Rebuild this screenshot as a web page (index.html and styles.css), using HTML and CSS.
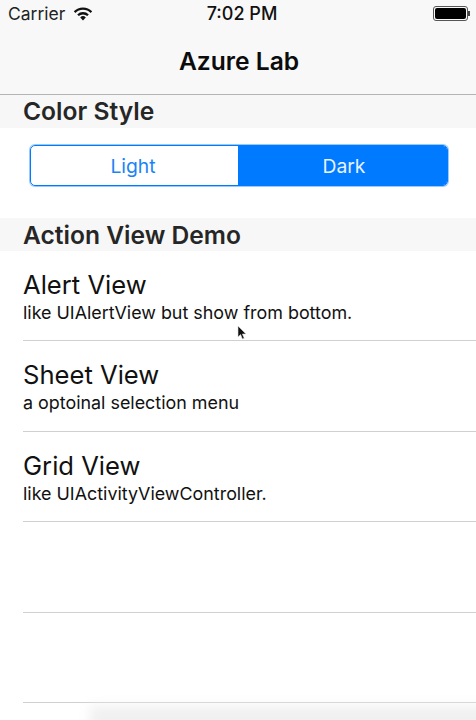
FILE: index.html
```html
<!DOCTYPE html>
<html lang="en">
<head>
    <meta charset="UTF-8">
    <meta name="viewport" content="width=device-width, initial-scale=1.0">
    <title>Azure Lab</title>
    <link rel="stylesheet" href="styles.css">
</head>
<body>
<div class="screen">
    <header class="nav">
        <div class="status">
            <div class="status-left">
                <span>Carrier</span>
                <svg class="wifi" width="20" height="15" viewBox="0 0 20 15">
                    <path d="M10 14.5 7.2 11.4a4 4 0 0 1 5.6 0Z" fill="#111"/>
                    <path d="M4.2 8.4a8.3 8.3 0 0 1 11.6 0l-1.6 1.7a6 6 0 0 0-8.4 0Z" fill="#111"/>
                    <path d="M.8 5.2a13 13 0 0 1 18.4 0l-1.6 1.7a10.7 10.7 0 0 0-15.2 0Z" fill="#111"/>
                </svg>
            </div>
            <div class="status-time">7:02 PM</div>
            <div class="status-right">
                <div class="battery"><div class="battery-fill"></div></div>
                <div class="battery-tip"></div>
            </div>
        </div>
        <h1 class="nav-title">Azure Lab</h1>
    </header>

    <h2 class="section-head">Color Style</h2>
    <div class="segment-wrap">
        <div class="segment">
            <div class="segment-item light">Light</div>
            <div class="segment-item active">Dark</div>
        </div>
    </div>

    <h2 class="section-head">Action View Demo</h2>
    <ul class="list">
        <li class="row">
            <div class="row-title">Alert View</div>
            <div class="row-sub">like UIAlertView but show from bottom.</div>
        </li>
        <li class="row">
            <div class="row-title">Sheet View</div>
            <div class="row-sub">a optoinal selection menu</div>
        </li>
        <li class="row">
            <div class="row-title">Grid View</div>
            <div class="row-sub">like UIActivityViewController.</div>
        </li>
        <li class="row"></li>
        <li class="row"></li>
    </ul>

    <svg class="cursor" width="10" height="15" viewBox="0 0 10 15">
        <path d="M1 1v11l2.6-2.4L5.4 14l1.8-.8-1.8-4.2H9Z" fill="#111" stroke="#ddd" stroke-width=".6"/>
    </svg>
    <div class="bottom-fade"></div>
</div>
</body>
</html>
```

FILE: styles.css
```css
* {
    box-sizing: border-box;
}

body {
    margin: 0;
    background-color: #ffffff;
    font-family: Inter, "Liberation Sans", sans-serif;
}

.screen {
    position: relative;
    width: 476px;
    height: 720px;
    overflow: hidden;
}

.nav {
    height: 95px;
    background-color: #f8f8f8;
    border-bottom: 1px solid #b4b4b4;
}

.status {
    display: grid;
    grid-template-columns: 1fr auto 1fr;
    align-items: center;
    height: 27px;
    padding: 0 6px 0 8px;
    font-size: 17.5px;
    color: #222;
}

.status-left {
    display: flex;
    align-items: center;
    gap: 8px;
}

.status-time {
    margin-left: 6px;
    font-size: 18px;
    font-weight: 500;
    color: #111;
}

.status-right {
    display: flex;
    align-items: center;
    justify-content: flex-end;
}

.battery {
    width: 35px;
    height: 15px;
    padding: 1px;
    border: 1px solid #555;
    border-radius: 3px;
}

.battery-fill {
    height: 100%;
    background-color: #000;
    border-radius: 2px;
}

.battery-tip {
    width: 2px;
    height: 5px;
    background-color: #444;
}

.nav-title {
    margin: 0;
    padding: 19px 0 0 2px;
    font-size: 24.6px;
    line-height: 30px;
    font-weight: 600;
    text-align: center;
    color: #0c0c0c;
}

.section-head {
    margin: 0;
    height: 33px;
    padding-left: 23px;
    background-color: #f7f7f7;
    font-size: 24.6px;
    line-height: 33px;
    font-weight: 600;
    color: #262626;
}

.section-head + .segment-wrap + .section-head {
    line-height: 34px;
}

.segment-wrap {
    height: 90px;
    padding: 17px 28px 0 30px;
}

.segment {
    display: flex;
    height: 41px;
    border: 1px solid #007aff;
    border-radius: 5px;
    box-shadow: 0 0 0 1px rgba(0, 122, 255, 0.4);
    overflow: hidden;
}

.segment-item {
    flex: 1;
    font-size: 19.3px;
    line-height: 41px;
    text-align: center;
    color: #1a84f5;
}

.segment-item.light {
    flex: 0 0 207px;
    padding-right: 3px;
}

.segment-item.active {
    padding-left: 3px;
    background-color: #007aff;
    color: #e8f2ff;
}

.list {
    margin: 0;
    padding: 0 0 0 23px;
    list-style: none;
}

.row {
    height: 90.4px;
    padding-top: 18px;
    border-bottom: 1px solid #d0d0d0;
    color: #111;
}

.row-title {
    font-size: 25.6px;
    line-height: 32px;
}

.row-sub {
    margin-top: 1px;
    font-size: 17.9px;
    line-height: 22px;
}

.cursor {
    position: absolute;
    left: 237px;
    top: 325px;
}

.bottom-fade {
    position: absolute;
    left: 90px;
    right: -20px;
    top: 706px;
    height: 40px;
    background-color: #f0f0f0;
    filter: blur(6px);
}
```
